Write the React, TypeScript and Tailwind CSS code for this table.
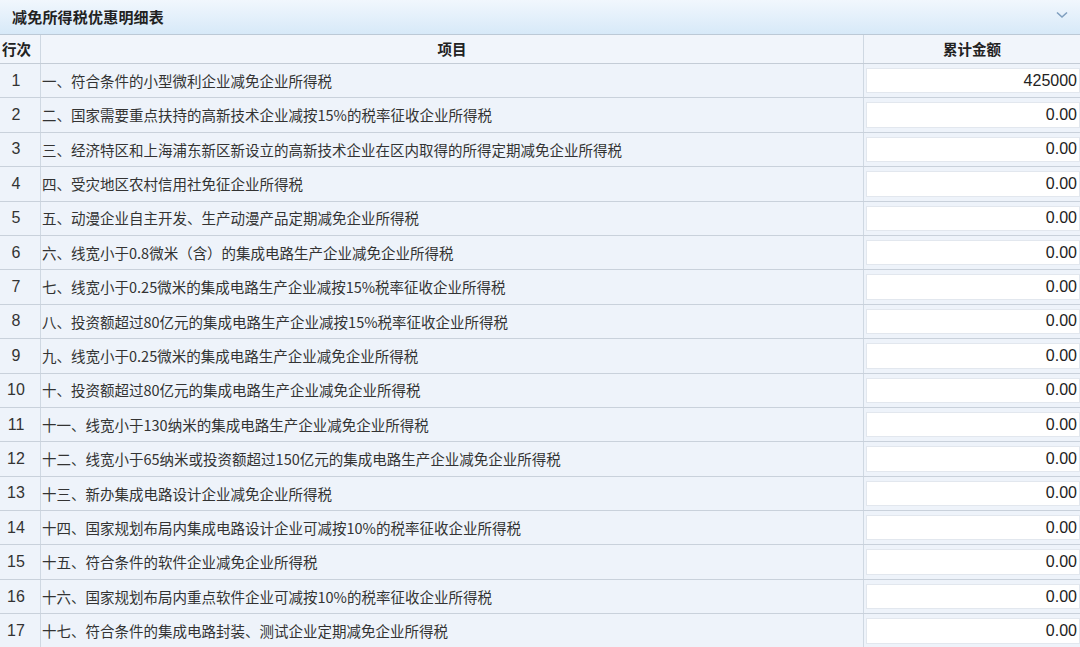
import React from "react";

const rows: { item: string; amount: string }[] = [
  { item: "一、符合条件的小型微利企业减免企业所得税", amount: "425000" },
  { item: "二、国家需要重点扶持的高新技术企业减按15%的税率征收企业所得税", amount: "0.00" },
  { item: "三、经济特区和上海浦东新区新设立的高新技术企业在区内取得的所得定期减免企业所得税", amount: "0.00" },
  { item: "四、受灾地区农村信用社免征企业所得税", amount: "0.00" },
  { item: "五、动漫企业自主开发、生产动漫产品定期减免企业所得税", amount: "0.00" },
  { item: "六、线宽小于0.8微米（含）的集成电路生产企业减免企业所得税", amount: "0.00" },
  { item: "七、线宽小于0.25微米的集成电路生产企业减按15%税率征收企业所得税", amount: "0.00" },
  { item: "八、投资额超过80亿元的集成电路生产企业减按15%税率征收企业所得税", amount: "0.00" },
  { item: "九、线宽小于0.25微米的集成电路生产企业减免企业所得税", amount: "0.00" },
  { item: "十、投资额超过80亿元的集成电路生产企业减免企业所得税", amount: "0.00" },
  { item: "十一、线宽小于130纳米的集成电路生产企业减免企业所得税", amount: "0.00" },
  { item: "十二、线宽小于65纳米或投资额超过150亿元的集成电路生产企业减免企业所得税", amount: "0.00" },
  { item: "十三、新办集成电路设计企业减免企业所得税", amount: "0.00" },
  { item: "十四、国家规划布局内集成电路设计企业可减按10%的税率征收企业所得税", amount: "0.00" },
  { item: "十五、符合条件的软件企业减免企业所得税", amount: "0.00" },
  { item: "十六、国家规划布局内重点软件企业可减按10%的税率征收企业所得税", amount: "0.00" },
  { item: "十七、符合条件的集成电路封装、测试企业定期减免企业所得税", amount: "0.00" },
];

const cjk = "font-['Noto_Sans_CJK_SC','Noto_Sans',sans-serif]";

export default function App() {
  return (
    <div className={`w-[1080px] h-[647px] overflow-hidden bg-[#eef3fa] text-[#333] ${cjk}`}>
      <div className="h-[35px] flex items-center justify-between pl-3 pr-3 bg-gradient-to-b from-[#f1f7fd] to-[#d7e9f8] border-b border-[#bcc9d6]">
        <span className="text-[15px] font-bold text-[#222] tracking-[0.2px]">减免所得税优惠明细表</span>
        <svg width="12" height="8" viewBox="0 0 12 8" className="mb-1">
          <path d="M1 1.5 L6 6 L11 1.5" fill="none" stroke="#7f9fbf" strokeWidth="1.6" />
        </svg>
      </div>
      <div className="flex h-[29px] border-b border-[#c4ccd6] bg-[#f1f5fb] text-[14.5px] font-bold text-[#222]">
        <div className="w-[41px] border-r border-[#cfd8e2] flex items-center pl-[2px]">行次</div>
        <div className="w-[823px] border-r border-[#cfd8e2] flex items-center justify-center">项目</div>
        <div className="flex-1 flex items-center justify-center">累计金额</div>
      </div>
      {rows.map((r, i) => (
        <div key={i} className="flex h-[34.4px] border-b border-[#c9d1db]">
          <div className="w-[41px] border-r border-[#cfd8e2] flex items-center justify-center pr-2 text-[16px] font-['Liberation_Sans',sans-serif]">
            {i + 1}
          </div>
          <div className="w-[823px] border-r border-[#cfd8e2] flex items-center pl-[1px] text-[14.5px] whitespace-nowrap">
            {r.item}
          </div>
          <div className="flex-1 flex items-center pl-[2px] py-[4px]">
            <div className="h-full w-full bg-white border border-[#e2e7ee] flex items-center justify-end pr-[2px] text-[16px] font-['Liberation_Sans',sans-serif] text-[#222]">
              {r.amount}
            </div>
          </div>
        </div>
      ))}
    </div>
  );
}
